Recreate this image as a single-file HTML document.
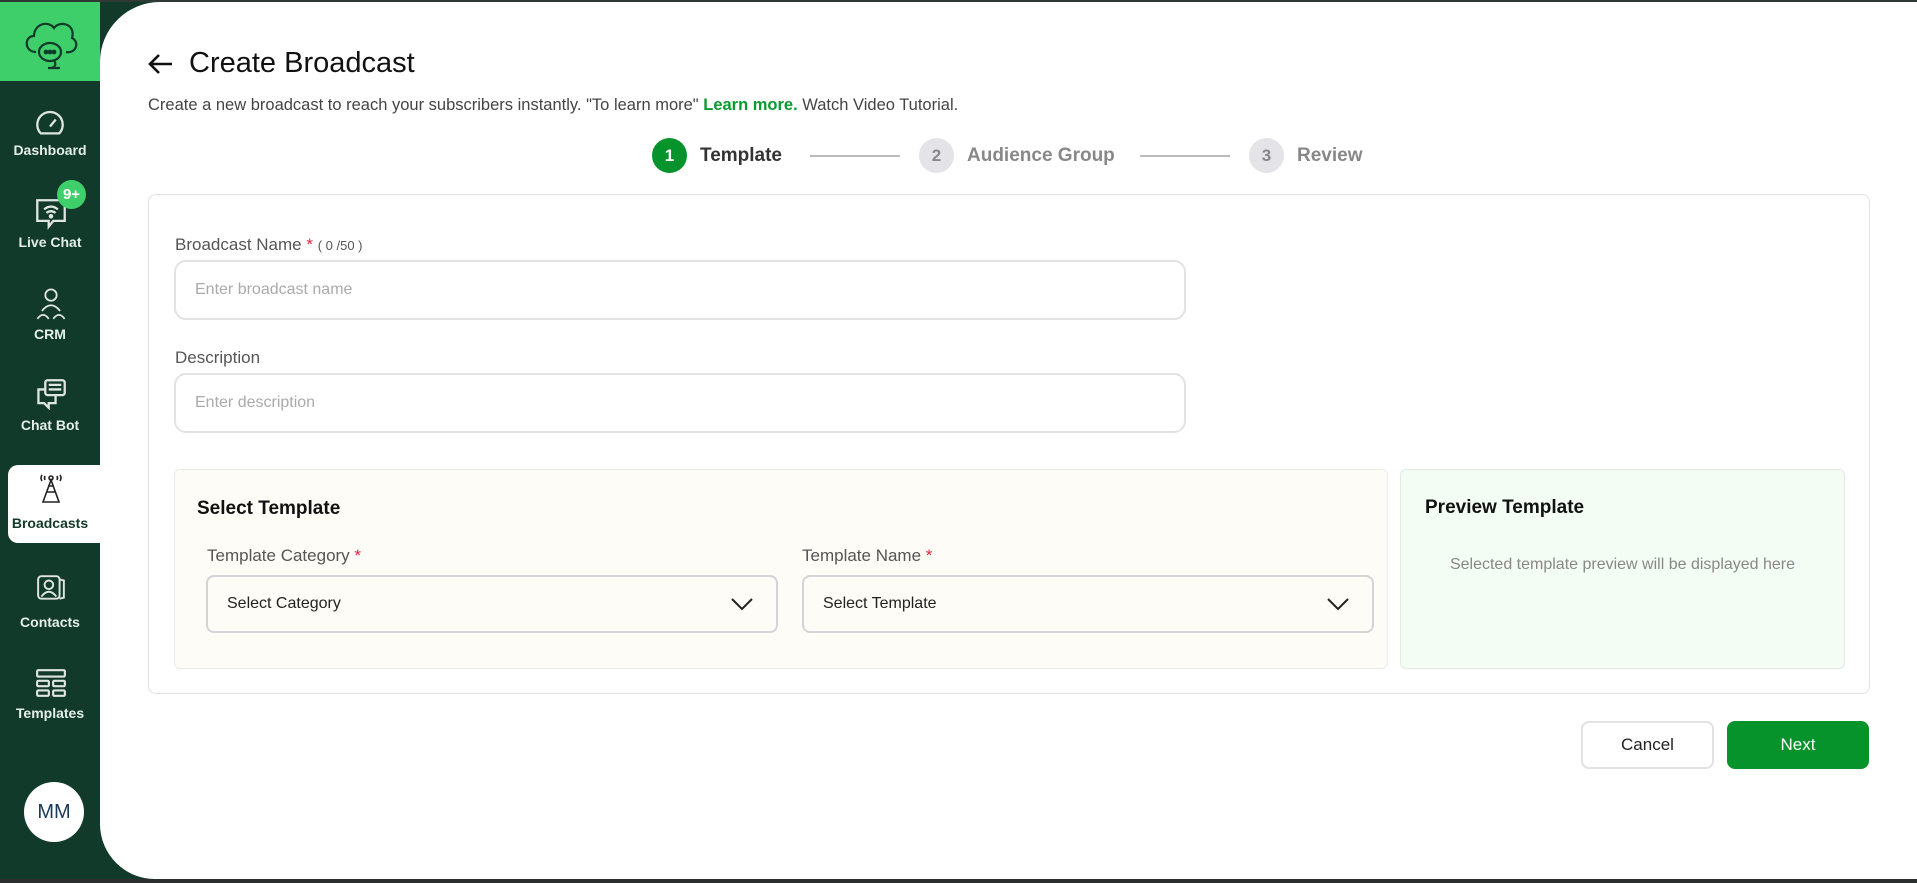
<!DOCTYPE html>
<html><head><style>
*{box-sizing:border-box;margin:0;padding:0}
body{width:1917px;height:883px;overflow:hidden;background:#123a2a;font-family:"Liberation Sans",sans-serif;position:relative}
.a{position:absolute}
.top{left:0;top:0;width:1917px;height:2px;background:#2f3a36}
.bot{left:0;top:879px;width:1917px;height:4px;background:#2b2f2e}
.hdr{left:0;top:2px;width:100px;height:79px;background:#3ecf6a}
.main{left:100px;top:2px;width:1817px;height:877px;background:#fff;border-radius:60px 0 0 55px}
.nav{left:0;width:100px;text-align:center;color:#e3efe8;font-size:14px;font-weight:bold}
.act{left:8px;top:465px;width:92px;height:78px;background:#fff;border-radius:10px 0 0 10px}
.lbl{font-size:17px;color:#555}
.inp{border:2px solid #e2e2e2;border-radius:12px;background:#fff;font-size:16px;color:#aaa;padding-left:19px;display:flex;align-items:center}
.sel{border:2px solid #d4d4d8;border-radius:8px;background:#fdfcf7;font-size:16px;color:#222;padding-left:19px;display:flex;align-items:center}
.req{color:#e0243c}
</style></head><body>
<div class="a top"></div>
<div class="a hdr"></div>
<svg class="a" style="left:20px;top:12px" width="60" height="58" viewBox="0 0 60 58" fill="none" stroke="#123a2a" stroke-width="2.2"><path d="M16 40 C4 40 4 24 14 24 C14 12 28 8 34 16 C40 8 56 12 52 26 C60 30 56 42 46 40"/><ellipse cx="30" cy="40" rx="11" ry="9"/><path d="M34 48 C36 52 36 54 32 56 M28 56 H40"/><circle cx="26" cy="40" r="1.3" fill="#123a2a"/><circle cx="30" cy="40" r="1.3" fill="#123a2a"/><circle cx="34" cy="40" r="1.3" fill="#123a2a"/></svg>
<div class="a main"></div>
<svg class="a" style="left:35px;top:108px" width="30" height="30" viewBox="0 0 26 26" fill="none" stroke="#dfe6e2" stroke-width="2"><path d="M5 22 A11 11 0 1 1 21 22 Z"/><path d="M13 16 L18 10"/></svg>
<div class="a nav" style="top:142px">Dashboard</div>
<svg class="a" style="left:35px;top:198px" width="32" height="32" viewBox="0 0 28 28" fill="none" stroke="#dfe6e2" stroke-width="2"><path d="M2 2 H26 V20 H16 L12 25 V20 H2 Z"/><path d="M8 10 Q14 5 20 10 M10 13 Q14 10 18 13"/><circle cx="14" cy="16" r="1"/></svg>
<div class="a" style="left:57px;top:180px;width:29px;height:29px;border-radius:50%;background:#3ecf6a;color:#fff;font-weight:bold;font-size:15px;text-align:center;line-height:29px">9+</div>
<div class="a nav" style="top:234px">Live Chat</div>
<svg class="a" style="left:35px;top:286px" width="32" height="34" viewBox="0 0 28 30" fill="none" stroke="#dfe6e2" stroke-width="1.6"><circle cx="14" cy="8" r="5"/><path d="M6 22 Q14 12 22 22 M2 29 Q7 22 12 29 M16 29 Q21 22 26 29"/></svg>
<div class="a nav" style="top:326px">CRM</div>
<svg class="a" style="left:35px;top:378px" width="32" height="32" viewBox="0 0 28 28" fill="none" stroke="#dfe6e2" stroke-width="2"><rect x="9" y="2" width="17" height="13" rx="2"/><path d="M12 6 H23 M12 10 H23"/><path d="M9 10 H3 V22 H8 L12 26 V22 H18 V15"/></svg>
<div class="a nav" style="top:417px">Chat Bot</div>
<div class="a act"></div>
<svg class="a" style="left:38px;top:472px" width="26" height="32" viewBox="0 0 26 32" fill="none" stroke="#222" stroke-width="1.6"><path d="M4 3 Q2 6 4 9 M22 3 Q24 6 22 9 M7 4 Q6 6 7 8 M19 4 Q20 6 19 8"/><circle cx="13" cy="6" r="2"/><path d="M13 8 L5 30 H21 Z M8 20 H18 M10 14 H16"/></svg>
<div class="a nav" style="top:515px;color:#123a2a">Broadcasts</div>
<svg class="a" style="left:36px;top:574px" width="30" height="28" viewBox="0 0 28 26" fill="none" stroke="#dfe6e2" stroke-width="1.8"><rect x="2" y="2" width="20" height="21" rx="3"/><path d="M22 5 L26 6 V22 L22 23"/><circle cx="12" cy="10" r="4"/><path d="M5 21 Q12 12 19 21"/></svg>
<div class="a nav" style="top:614px">Contacts</div>
<svg class="a" style="left:35px;top:668px" width="32" height="30" viewBox="0 0 30 28" fill="none" stroke="#dfe6e2" stroke-width="2"><rect x="2" y="2" width="26" height="6" rx="1"/><rect x="2" y="12" width="11" height="5" rx="1"/><rect x="17" y="12" width="11" height="5" rx="1"/><rect x="2" y="21" width="11" height="5" rx="1"/><rect x="17" y="21" width="11" height="5" rx="1"/></svg>
<div class="a nav" style="top:705px">Templates</div>
<div class="a" style="left:24px;top:782px;width:60px;height:60px;border-radius:50%;background:#fff;color:#1a3a5a;font-size:20px;text-align:center;line-height:60px">MM</div>
<div class="a bot"></div>
<svg class="a" style="left:147px;top:53px" width="26" height="22" viewBox="0 0 26 22" fill="none" stroke="#111" stroke-width="2.6"><path d="M25 11 H3 M12 2 L3 11 L12 20"/></svg>
<div class="a" style="left:189px;top:47px;font-size:29px;color:#111">Create Broadcast</div>
<div class="a" style="left:148px;top:96px;font-size:16.5px;color:#444">Create a new broadcast to reach your subscribers instantly. "To learn more" <b style="color:#0a9a2e">Learn more.</b> Watch Video Tutorial.</div>
<div class="a" style="left:652px;top:138px;width:35px;height:35px;border-radius:50%;background:#07932b;color:#fff;font-weight:bold;font-size:17px;text-align:center;line-height:35px">1</div>
<div class="a" style="left:700px;top:145px;font-size:19px;font-weight:bold;color:#333">Template</div>
<div class="a" style="left:810px;top:155px;width:90px;height:2px;background:#bbb"></div>
<div class="a" style="left:919px;top:138px;width:35px;height:35px;border-radius:50%;background:#e3e3e8;color:#888;font-weight:bold;font-size:17px;text-align:center;line-height:35px">2</div>
<div class="a" style="left:967px;top:145px;font-size:19px;font-weight:bold;color:#888">Audience Group</div>
<div class="a" style="left:1140px;top:155px;width:90px;height:2px;background:#bbb"></div>
<div class="a" style="left:1249px;top:138px;width:35px;height:35px;border-radius:50%;background:#e3e3e8;color:#888;font-weight:bold;font-size:17px;text-align:center;line-height:35px">3</div>
<div class="a" style="left:1297px;top:145px;font-size:19px;font-weight:bold;color:#888">Review</div>
<div class="a" style="left:148px;top:194px;width:1722px;height:500px;border:1.5px solid #e2e2e2;border-radius:8px"></div>
<div class="a lbl" style="left:175px;top:235px">Broadcast Name <span class="req">*</span> <span style="font-size:13px">( 0 /50 )</span></div>
<div class="a inp" style="left:174px;top:260px;width:1012px;height:60px">Enter broadcast name</div>
<div class="a lbl" style="left:175px;top:348px">Description</div>
<div class="a inp" style="left:174px;top:373px;width:1012px;height:60px">Enter description</div>
<div class="a" style="left:174px;top:469px;width:1214px;height:200px;background:#fdfcf7;border:1.5px solid #ebebe6;border-radius:6px"></div>
<div class="a" style="left:197px;top:498px;font-size:19px;font-weight:bold;color:#111">Select Template</div>
<div class="a lbl" style="left:207px;top:546px">Template Category <span class="req">*</span></div>
<div class="a sel" style="left:206px;top:575px;width:572px;height:58px">Select Category</div>
<svg class="a" style="left:730px;top:596px" width="24" height="16" viewBox="0 0 24 16" fill="none" stroke="#222" stroke-width="2"><path d="M2 3 L12 13 L22 3"/></svg>
<div class="a lbl" style="left:802px;top:546px">Template Name <span class="req">*</span></div>
<div class="a sel" style="left:802px;top:575px;width:572px;height:58px">Select Template</div>
<svg class="a" style="left:1326px;top:596px" width="24" height="16" viewBox="0 0 24 16" fill="none" stroke="#222" stroke-width="2"><path d="M2 3 L12 13 L22 3"/></svg>
<div class="a" style="left:1400px;top:469px;width:445px;height:200px;background:#f4fdf3;border:1.5px solid #e2ebe2;border-radius:6px"></div>
<div class="a" style="left:1425px;top:497px;font-size:19px;font-weight:bold;color:#111">Preview Template</div>
<div class="a" style="left:1400px;top:556px;width:445px;text-align:center;font-size:16px;color:#888">Selected template preview will be displayed here</div>
<div class="a" style="left:1581px;top:721px;width:133px;height:48px;border:2px solid #e2e2e2;border-radius:8px;text-align:center;line-height:44px;font-size:17px;color:#222">Cancel</div>
<div class="a" style="left:1727px;top:721px;width:142px;height:48px;background:#07932b;border-radius:8px;text-align:center;line-height:48px;font-size:17px;color:#fff">Next</div>
</body></html>
